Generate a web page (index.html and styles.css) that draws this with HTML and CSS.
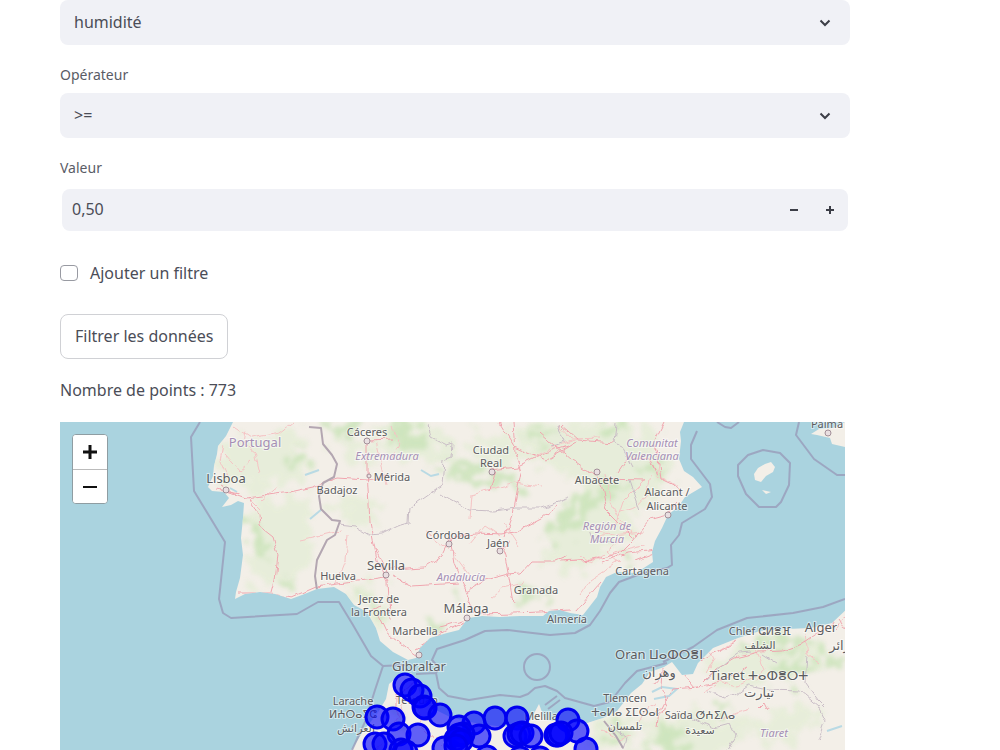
FILE: index.html
```html
<!DOCTYPE html>
<html lang="fr">
<head>
<meta charset="utf-8">
<meta name="viewport" content="width=device-width, initial-scale=1">
<title>Filtrer les données</title>
<link rel="stylesheet" href="styles.css">
</head>
<body>
<main class="page">
  <form class="filters">
    <div class="select-wrap">
      <select class="select" aria-label="Colonne"><option>humidité</option></select>
      <svg class="chevron" viewBox="0 0 12 8" aria-hidden="true"><path d="M1.500 1.500 6 6l4.500-4.500"/></svg>
    </div>
    <label class="label" for="op">Opérateur</label>
    <div class="select-wrap">
      <select class="select" id="op"><option>&gt;=</option></select>
      <svg class="chevron" viewBox="0 0 12 8" aria-hidden="true"><path d="M1.500 1.500 6 6l4.500-4.500"/></svg>
    </div>
    <label class="label" for="val">Valeur</label>
    <div class="number">
      <input class="number-input" id="val" type="text" inputmode="decimal" value="0,50">
      <button class="step" type="button" aria-label="Diminuer"><svg viewBox="0 0 10 10"><path d="M1 5h8"/></svg></button>
      <button class="step" type="button" aria-label="Augmenter"><svg viewBox="0 0 10 10"><path d="M1 5h8M5 1v8"/></svg></button>
    </div>
    <label class="check"><input class="check-box" type="checkbox">Ajouter un filtre</label>
    <button class="submit" type="button">Filtrer les données</button>
  </form>
  <p class="count">Nombre de points : 773</p>
  <section class="map" aria-label="Carte">
    <div class="zoom">
      <button class="zoom-btn" type="button" aria-label="Zoom avant"><svg viewBox="0 0 16 16"><path class="thick" d="M1 8h14M8 1v14"/></svg></button>
      <button class="zoom-btn" type="button" aria-label="Zoom arrière"><svg viewBox="0 0 16 16"><path d="M1 8h14"/></svg></button>
    </div>
    <svg class="map-svg" viewBox="60 422 785 328">
      <defs>
        <filter id="vegetation" x="-5%" y="-5%" width="110%" height="110%">
          <feTurbulence type="fractalNoise" baseFrequency="0.07" numOctaves="3" seed="4" result="n"/>
          <feDisplacementMap in="SourceGraphic" in2="n" scale="46" xChannelSelector="R" yChannelSelector="G"/>
          <feGaussianBlur stdDeviation="2"/>
        </filter>
        <filter id="winding" x="-5%" y="-5%" width="110%" height="110%">
          <feTurbulence type="fractalNoise" baseFrequency="0.09" numOctaves="2" seed="9" result="n"/>
          <feDisplacementMap in="SourceGraphic" in2="n" scale="7" xChannelSelector="R" yChannelSelector="G"/>
        </filter>
        <clipPath id="landclip">
          <path id="iberia" d="M233 422L226 436 218 446 217 454 214 466 213 476 208 487 212 491 224 492 229 498 222 507 231 505 238 501 244 503 243 518 241 538 243 555 240 578 236 592 235 599 245 594 260 592 275 594 291 599 302 595 317 589 334 587 346 594 354 605 367 612 376 628 380 641 393 652 408 660 416 658 420 648 430 638 447 633 459 630 468 618 482 616 500 617 520 616 543 616 549 611 560 610 570 613 583 615 590 606 597 597 600 587 606 577 617 572 636 573 653 562 652 552 655 541 662 528 668 515 679 506 685 497 702 487 693 477 684 471 679 459 681 441 680 432 684 422Z"/>
          <path id="africa" d="M350 752L364 730 377 714 386 699 389 684 399 676 411 673 417 681 420 695 432 708 450 717 475 723 503 727 530 721 539 704 545 720 567 722 584 724 603 718 617 711 631 693 642 684 650 672 664 667 672 662 682 675 693 674 698 663 713 648 738 638 760 631 787 629 811 628 832 623 847 609V752Z"/>
        </clipPath>
      </defs>
      <rect class="sea" x="60" y="422" width="785" height="328"/>
      <use class="land" href="#iberia"/>
      <use class="land" href="#africa"/>
      <path class="land" d="M754 474l4-6 7-4 6-2 4 5-2 5-7 4-5 6-6-2ZM762 490l9 2-5 2ZM811 434l8-5 14-1 12-6V447l-13-3-2-6-13-3Z"/>
      <g clip-path="url(#landclip)">
        <g class="scrub" filter="url(#vegetation)">
          <path d="M220 440l80-10 10 50-50 10-35-5ZM250 500l60 0 0 60-20 25-40-5ZM335 430l50 25-15 8-35-18ZM330 500l40-8 10 30-30 5ZM370 422h60l30 25-20 20-50-8ZM470 430l40 10 15 20-40 5ZM520 422h120l30 40-10 40-60 10-35-40-45-10ZM540 560l30-60 50-10 15 40-50 40ZM700 670l60-22 60-5 20 14-50 25-60 8ZM745 725l60-24 20 14-45 35ZM640 725l60-15 50 15-20 27h-90ZM590 720h40v30h-40ZM345 590l30-5 20 30-20 12Z"/>
        </g>
        <g class="green" filter="url(#vegetation)">
          <path d="M252 535l12-4 6 10-10 14-10-5ZM248 525l8-4 6 10-8 6ZM252 532l10-5 8 12-10 10ZM278 583l9-3 4 6-12 3ZM318 423l30-1 12 7-24 7ZM285 455l14-5 8 9-14 6ZM385 427l20-3 24 20-10 9-26-11ZM440 460l25 5 65 17-10 8-52-10-30-7ZM545 535l15-22 22-16 12 6-12 21-22 16ZM570 500l22-11 28-12 12 9-26 18-32 8ZM530 427l15 1 10 11-18 4ZM600 427l22-4 8 8-20 8ZM632 462l22-2 12 15-15 6ZM365 598l8-1 4 13-8 4ZM430 627l16-5 8 6-16 5ZM454 588l8 2 3 8-8 2ZM518 592l18-4 10 8-20 6ZM620 562l6-11 9 4-7 10ZM655 735l18-11 14 8-10 18h-28ZM740 642l65-7 18 9-27 5-55 2ZM775 665l28-7 18 4-8 10-33 5ZM828 652l12 4 2 10-12 4ZM605 732l16-5 5 13-15 7ZM718 700l18 6-3 7-16-4ZM395 704l8 2 3 20-10 8Z"/>
        </g>
        <path class="water" d="M310 519l12-10M421 470l10 6 8-2M652 692l10-5 15 2-8 7-15 3M827 731l15-5M305 475l14-5M230 488l7 4"/>
        <g class="roads minor" filter="url(#winding)">
          <path d="M233 426l18 12 29-5 14-11M226 454l14 16 11-9M223 445l-3 16 8 18M245 430l-2 13 12 10 5 20M261 500l17-14M248 497l12 12M348 535l-2 25-9 23M300 540l40-9M376 440l10 45M392 457l8-14-8-18M425 530l30 25 15 20M470 520l2-26 43-11M515 483l25 4M577 439l-22 8-20 10M605 472l5 28 9 18 13 15M645 479l-22 22-8 24-15 13M563 562l37-2 20-9 24-5M580 595l10-15 30-20M650 475l-4 21-9 10-17 5M660 460l-3 17 20 8M592 527l20 8 32-3M620 540l-14 11 13 11M580 556l12 7 12-9M558 425l13 14 30-1M490 598l12-10 23-5M505 524l14 22M500 536l-15-10-15 18"/>
          <path d="M704 692l16-10 17 4 19-9M704 640l10 20-7 12M720 650l13-8M805 634l3 20 12 9M720 720l16-7 15-4M657 704l-14 8-6 12M410 695l-14 25-20 30M412 696l10 30 20 20M602 730l17 10 12-4M755 647l9 21-7 14"/>
        </g>
        <g class="roads" filter="url(#winding)">
          <path d="M226 491l20 7 15-2 29-4 23-5 24-9 30 2 20-3M249 498l9 16 1 12 14 11 5 17-3 27-3 11M238 593l34 0 21 4 23-10 22-3 48-7M367 441l0 30 3 52 7 38 11 20 1 20 2 20M367 441l26-1M388 575l-12-25M388 569l36-2 18-12 8-17 26-5 26 1 13-2 27-14 15-12M450 538l4 25 7 16 14 33M391 575l21 11 47-3M467 591l18-11 23-6 12-1 11-12 24 0 12-5M501 545l4 11 5 28 3 18M510 541l-12 7M480 614l33-1 27-1 30-2M513 422l2 30 6 20-5 26-3 17-8 22M490 470l28-3 26-13 24-8M496 472l-6 18M499 422l15 24 32 14 30-18M540 432l33 29 26 18 46 1M618 472l10-15 22 2 8 17M560 425l17 15 38 3M600 479l7 32 26 26M602 563l24-10 32-3M668 515l-19 5-17 20-14 14-25 6-33 2M677 503l-11 12M663 422l-10 20 6 18 3 20 17 8M391 604l-13 11 8 17 20 16 11 8M415 649l30-18 19-8M380 606l-13 8M440 627l30-8M216 489l24 4M222 486l14 8M636 560l20-8M576 611l24-28"/>
          <path d="M840 610l-8 14-17 11-13 9-19 7-24 1-24 6-20 12-17 17-26 2-9 18-9 6M662 668l-1 20 7 18-10 8-2 12M684 676l10 12 25-6 28-15M695 662l28-13 14-8M759 707l5-5 4 8M416 675l-8 12-11 8 0 20M846 612l-10 16M838 618l8 12M664 672l-10 12"/>
        </g>
        <path class="province" filter="url(#winding)" d="M428 424l3 13 16 8 6-2-1 15-8 3-2 24-12 8-20 14-1 16-11 3-16 8-13 1-13-8-19-2M440 493l20 11 9 6 25 1 22-3 25 0 28-10M558 425l7 17-12 4M617 424l-2 20 8 4 10 19M630 480l10 30M590 530l4 11 20 1M706 680l22-19 12-8 12-1M708 692l17 5 12-3 11-8 20 4 32 1 18 15 7 15-7 20M685 716l30 12 15-4 6 12-8 14M807 655l-2 28 12 17 8 8M610 724l17 14-3 12M762 654l14 9"/>
        <path class="border" d="M309 427l12 1 2 16 9 11 5 9-3 13-11 6-4 13 2 13 11 11 8 1-5 14-8 5-10 20-2 16 2 14"/>
        <path class="border" d="M604 721l12 15 7 12"/>
      </g>
      <path class="seaborder" d="M200 422l-9 15 3 54 31 51-6 57 4 14 8 5 66-4 21-12h21l14 23 18 31 12 10M383 666l22-1M383 666l-8 24-10 32-13 28M416 674l20-1 3-5-7-8 5-11 28-9 20-9 22-1 17 2 26 3 25-2 15-8 10-14 10-18 9-11 24-9 24-5 5-3-1-20 8-10 3-12 23-14 7-12-2-13-19-25v-14l6-14M436 673l3 15 9 8 21 4 31-5 20 2 8-3 7-6 10-2 12 5 8 7 29 8 16-4 15-19 12-12 30-8M663 662l30-15 24-17 30-12 46-5 30-6 22-8M717 422l8 5 6 1 8-6M738 465l10-10 15-5 17 3 10 10-1 22-8 17-5 5h-17l-13-13-8-18ZM799 422l-3 13 18 24 23 16h9M545 705l12-9M548 709l12-9"/>
      <circle class="seaborder" cx="537" cy="667" r="13"/>
      <g class="towns"><circle cx="226" cy="490" r="3"/><circle cx="367" cy="441" r="3"/><circle cx="386" cy="575" r="3"/><circle cx="467" cy="618" r="3"/><circle cx="597" cy="472" r="3"/><circle cx="419" cy="655" r="3"/><circle cx="492" cy="472" r="3"/><circle cx="449" cy="544" r="3"/><circle cx="668" cy="515" r="3"/><circle cx="500" cy="551" r="3"/><circle cx="828" cy="433" r="3"/><circle cx="369" cy="476" r="2"/></g>
      <g class="place">
        <text class="region big" x="255" y="447">Portugal</text>
        <text class="region" x="387" y="460">Extremadura</text>
        <text class="region" x="461" y="581">Andalucía</text>
        <text class="region" x="652" y="447">Comunitat</text><text class="region" x="652" y="460">Valenciana</text>
        <text class="region" x="607" y="530">Región de</text><text class="region" x="607" y="543">Murcia</text>
        <text class="region" x="774" y="737">Tiaret</text>
        <text class="city" x="226" y="483">Lisboa</text>
        <text class="city" x="386" y="570">Sevilla</text>
        <text class="city" x="466" y="613">Málaga</text>
        <text x="367" y="436">Cáceres</text><text x="392" y="481">Mérida</text>
        <text x="337" y="494">Badajoz</text>
        <text x="491" y="454">Ciudad</text><text x="491" y="467">Real</text>
        <text x="597" y="484">Albacete</text>
        <text x="667" y="496">Alacant /</text><text x="667" y="510">Alicante</text>
        <text x="448" y="539">Córdoba</text><text x="498" y="547">Jaén</text>
        <text x="338" y="580">Huelva</text><text x="536" y="594">Granada</text>
        <text x="379" y="603">Jerez de</text><text x="379" y="616">la Frontera</text>
        <text x="415" y="635">Marbella</text><text x="567" y="623">Almería</text>
        <text x="642" y="575">Cartagena</text>
        <text class="city" x="419" y="671">Gibraltar</text>
        <text x="827" y="428">Palma</text>
        <text x="353" y="705">Larache</text><text x="353" y="718">ⵍⵄⵔⴰⵢⵛ</text><text x="356" y="732">العرائش</text>
        <text x="417" y="704">Tétouan</text><text x="541" y="720">Melilla</text>
        <text x="625" y="702">Tlemcen</text><text x="625" y="716">ⵜⴰⵍⴰ ⵉⵎⵙⴰⵏ</text><text x="625" y="730">تلمسان</text>
        <text class="city" x="659" y="659">Oran ⵡⴰⵀⵔⴻⵏ</text><text class="city" x="659" y="677">وهران</text>
        <text x="760" y="635">Chlef ⵛⵍⴻⴼ</text><text x="760" y="649">الشلف</text>
        <text class="city" x="821" y="632">Alger</text><text class="city" x="848" y="650">الجزائر</text>
        <text class="city" x="759" y="680">Tiaret ⵜⴰⵀⴻⵔⵜ</text><text class="city" x="759" y="697">تيارت</text>
        <text x="700" y="719">Saïda ⵚⵄⵉⴷⴰ</text><text x="700" y="734">سعيدة</text>
      </g>
      <g class="points">
        <circle cx="405" cy="685" r="11"/><circle cx="412" cy="690" r="11"/><circle cx="420" cy="696" r="11"/><circle cx="424" cy="707" r="11"/><circle cx="425" cy="708" r="11"/><circle cx="440" cy="715" r="11"/>
        <circle cx="377" cy="717" r="11"/><circle cx="393" cy="719" r="11"/><circle cx="399" cy="734" r="11"/><circle cx="418" cy="735" r="11"/><circle cx="375" cy="744" r="11"/><circle cx="384" cy="744" r="11"/><circle cx="401" cy="750" r="11"/><circle cx="406" cy="752" r="11"/>
        <circle cx="444" cy="748" r="11"/><circle cx="474" cy="723" r="11"/><circle cx="479" cy="736" r="11"/><circle cx="459" cy="727" r="11"/><circle cx="463" cy="734" r="11"/><circle cx="459" cy="735" r="11"/><circle cx="456" cy="739" r="11"/><circle cx="461" cy="741" r="11"/><circle cx="456" cy="746" r="11"/>
        <circle cx="495" cy="718" r="11"/><circle cx="517" cy="718" r="11"/><circle cx="515" cy="736" r="11"/><circle cx="519" cy="734" r="11"/><circle cx="522" cy="733" r="11"/><circle cx="531" cy="736" r="11"/><circle cx="487" cy="757" r="11"/><circle cx="520" cy="758" r="11"/><circle cx="540" cy="758" r="11"/>
        <circle cx="568" cy="720" r="11"/><circle cx="577" cy="731" r="11"/><circle cx="556" cy="735" r="11"/><circle cx="558" cy="735" r="11"/><circle cx="561" cy="733" r="11"/><circle cx="586" cy="749" r="11"/>
      </g>
    </svg>
  </section>
</main>
</body>
</html>
```
FILE: styles.css
```css
* { box-sizing: border-box; }
body {
  margin: 0;
  background: #fff;
  color: #4b4d57;
  font: 16px/24px "Noto Sans", "DejaVu Sans", sans-serif;
}
button, input, select { font: inherit; color: inherit; }
.page { padding: 0 150px 0 60px; }
.filters { display: flex; flex-direction: column; align-items: stretch; }
.select-wrap { display: grid; align-items: center; }
.select-wrap > * { grid-area: 1 / 1; }
.select {
  width: 100%;
  height: 45px;
  padding: 0 14px 2px;
  border: 0;
  border-radius: 8px;
  background: #f0f1f6;
  appearance: none;
}
.chevron {
  justify-self: end;
  width: 12px;
  height: 8px;
  margin-right: 19px;
  pointer-events: none;
}
.chevron path, .step path { fill: none; stroke: #3c3e47; stroke-width: 2; }
.label { padding: 20px 0 8px; font-size: 14px; line-height: 20px; color: #5a5c66; }
.number {
  display: flex;
  align-items: center;
  height: 42px;
  margin: 3px 2px 0;
  border-radius: 8px;
  background: #f0f1f6;
}
.number-input {
  flex: 1;
  min-width: 0;
  height: 40px;
  padding: 0 10px 2px;
  border: 0;
  background: none;
}
.step {
  display: flex;
  align-items: center;
  justify-content: center;
  width: 36px;
  height: 42px;
  padding: 0;
  border: 0;
  background: none;
}
.step svg { width: 10px; height: 10px; }
.check { display: flex; align-items: center; gap: 12px; margin-top: 30px; }
.check-box {
  width: 18px;
  height: 16px;
  margin: 0;
  border: 1px solid #989aa2;
  border-radius: 4px;
  background: #fff;
  appearance: none;
}
.submit {
  align-self: flex-start;
  height: 45px;
  margin-top: 29px;
  padding: 0 14px 2px;
  border: 1px solid #d0d1d5;
  border-radius: 8px;
  background: #fff;
}
.count { margin: 19px 0 20px; }
.map { position: relative; margin-right: 5px; overflow: hidden; }
.map-svg { display: block; width: 100%; height: auto; }
.zoom {
  position: absolute;
  top: 12px;
  left: 12px;
  display: flex;
  flex-direction: column;
  border: 1px solid #8f9da2;
  border-radius: 4px;
  background: #fff;
  overflow: hidden;
}
.zoom-btn {
  display: flex;
  align-items: center;
  justify-content: center;
  width: 34px;
  height: 34px;
  padding: 0;
  border: 0;
  background: #fff;
}
.zoom-btn + .zoom-btn { border-top: 1px solid #bbb; }
.zoom-btn svg { width: 16px; height: 16px; }
.zoom-btn path { fill: none; stroke: #111; stroke-width: 2; }
.zoom-btn .thick { stroke-width: 3; }
.sea { fill: #aad3df; }
.land { fill: #f3efe8; }
.green { fill: #c9e3b8; opacity: 0.8; }
.scrub { fill: #e4edd6; opacity: 0.8; }
.water { fill: none; stroke: #b9dae4; stroke-width: 2; }
.roads { fill: none; stroke: #f0a5af; stroke-width: 1; stroke-linejoin: round; }
.minor { stroke: #f5c3c4; }
.province { fill: none; stroke: #c9bdc6; stroke-width: 1; }
.border { fill: none; stroke: #b3a6b1; stroke-width: 2; stroke-linejoin: round; }
.seaborder { fill: none; stroke: #9a9fbc; stroke-opacity: 0.85; stroke-width: 2; stroke-linejoin: round; }
.towns { fill: #e9dfe1; stroke: #a28f98; stroke-width: 1; }
.place text {
  fill: #5c5c60;
  stroke: #fff;
  stroke-opacity: 0.5;
  stroke-width: 2px;
  paint-order: stroke;
  text-anchor: middle;
  font-size: 11px;
}
.place .city { font-size: 13px; }
.place .region { fill: #a58fb5; font-style: italic; }
.place .big { font-size: 13px; font-style: normal; }
.points { fill: #00f; fill-opacity: 0.6; stroke: #0000f0; stroke-width: 3; }
```
